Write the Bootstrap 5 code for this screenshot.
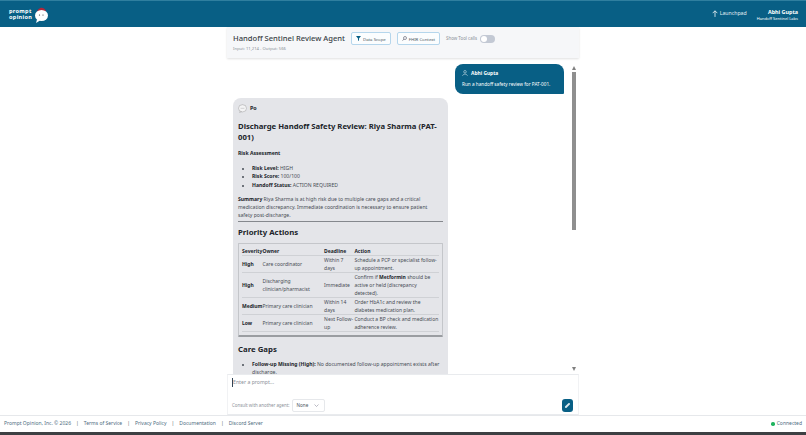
<!DOCTYPE html>
<html lang="en">
<head>
  <meta charset="UTF-8" />
  <meta name="viewport" content="width=device-width, initial-scale=1.0" />
  <title>Handoff Sentinel Review Agent</title>
  <link href="https://cdn.jsdelivr.net/npm/bootstrap@5.3.0/dist/css/bootstrap.min.css" rel="stylesheet" />
  <style>
    html, body { height: 100%; overflow: hidden; }
    body { font-family: "Noto Sans", "Open Sans", sans-serif; font-size: 5.1px; color: #2b2f36; background: #fff; display: flex; flex-direction: column; border-bottom: 3px solid #3d4043; }

    .top-bar { height: 27px; background: #085f85; border-top: 1px solid #2f7f9f; padding: 0 8px 0 9px; color: #fff; flex: none; }
    .logo-wrap { gap: 2px; }
    .logo-text { font-size: 5.6px; line-height: 6px; font-weight: 700; letter-spacing: .3px; }
    .launchpad { font-size: 5.2px; color: #e4eff4; margin-right: 10px; gap: 2px; }
    .user-name { font-size: 5.4px; font-weight: 700; line-height: 8px; }
    .user-org { font-size: 4px; line-height: 5px; }

    .main-col { width: 352px; flex: 1; min-height: 0; }
    .chat-head { height: 31px; background: #f6f7f9; padding: 5px 6px 0; box-shadow: 0 1px 2px rgba(0,0,0,.12); flex: none; position: relative; z-index: 1; gap: 6px; }
    .chat-title { font-size: 7.6px; line-height: 13px; color: #3a3f47; font-weight: 500; }
    .chat-usage { font-size: 4.2px; line-height: 6px; color: #8b9098; margin-top: 1px; }
    .btn-scope { font-size: 4.3px; line-height: 6px; padding: 0 4px; height: 13px; border: 1px solid #b5d6ec; border-radius: 2px; color: #4a5560; background: #fbfdfe; display: flex; align-items: center; gap: 2px; }
    .tool-row { height: 13px; gap: 3px; }
    .tool-label { font-size: 4.4px; color: #8b9098; }
    .fake-switch { width: 15px; height: 8px; border-radius: 4px; background: #c3c9d4; position: relative; }
    .fake-switch::after { content: ""; position: absolute; left: 1px; top: 1px; width: 6px; height: 6px; border-radius: 50%; background: #fff; }

    .chat-area { flex: 1; min-height: 0; }
    .chat-scroll { flex: 1; min-width: 0; overflow: hidden; padding: 6px 6px 0 6px; }
    .scroll-rail { width: 9px; flex: none; padding: 8px 3px 3px 2px; }
    .scroll-thumb { width: 4px; height: 158px; background: #8f8f8f; margin-top: 2px; }

    .bubble-user { width: 109px; height: 30px; background: #085f85; color: #fff; border-radius: 8px 8px 1px 8px; padding: 5px 7px; }
    .bubble-user .who { font-size: 4.9px; font-weight: 700; line-height: 8px; display: flex; align-items: center; gap: 3px; }
    .bubble-user .msg { font-size: 4.7px; line-height: 7px; margin-top: 4px; }
    .bubble-agent { width: 215px; background: #e4e5e9; border-radius: 8px; padding: 5px 5px 10px 5px; margin-top: 4px; }
    .bubble-agent .who { font-size: 5.4px; font-weight: 700; color: #20242a; display: flex; align-items: center; gap: 3px; height: 11px; margin-bottom: 7px; }
    .bubble-agent h1 { font-size: 7.7px; line-height: 11px; font-weight: 700; margin: 0 0 6px; color: #20242a; }
    .bubble-agent h2 { font-size: 7.8px; line-height: 11px; font-weight: 700; margin: 0 0 5px; color: #20242a; }
    .bubble-agent p { margin: 0 0 1px; line-height: 8.4px; color: #474c54; }
    .bubble-agent b { color: #20242a; font-weight: 700; }
    .bubble-agent ul { margin: 0 0 5.5px; padding-left: 14px; color: #474c54; line-height: 8.4px; }
    .bubble-agent hr { margin: 0 0 5px; border: 0; border-top: 1px solid #85888d; opacity: 1; }
    .bubble-agent .lead-line { margin-bottom: 6.5px; }

    .risk-table-wrap { border: 1px solid #c4c6ca; border-bottom: 2px solid #9a9da1; border-radius: 1px; padding: 3px; margin-bottom: 7px; }
    .risk-table { --bs-table-bg: transparent; margin: 0; font-size: 5px; line-height: 8px; color: #474c54; border-color: #cfd1d5; }
    .risk-table th, .risk-table td { padding: 0; vertical-align: middle; border-bottom: 1px solid #cfd1d5; color: #474c54; }
    .risk-table th { color: #20242a; }
    .risk-table td b { color: #20242a; }

    .prompt-box { height: 41px; border-top: 1px solid #e9ebee; border-bottom: 1px solid #e9ebee; border-left: 1px solid #f1f2f4; border-right: 1px solid #f1f2f4; padding: 3px 5px 2px 4px; flex: none; background: #fff; }
    .prompt-input { font-size: 5.2px; line-height: 9px; color: #8b9098; border-left: 1px solid #345; height: 9px; }
    .consult-row { gap: 2px; }
    .consult-label { font-size: 4.4px; color: #8b9098; }
    .none-select { width: 33px; height: 13px; border: 1px solid #e6e8eb; border-radius: 2px; font-size: 4.6px; color: #4a5560; padding: 0 5px 0 4px; }
    .send-btn { width: 11px; height: 13px; background: #085f85; border-radius: 3px; border: 0; padding: 0; }

    .page-foot { height: 17px; border-top: 1px solid #e6e8eb; padding: 0 4px; font-size: 5px; color: #4d6d80; flex: none; background: #fff; }
    .page-foot .sep { margin: 0 5px; color: #566; }
    .status-wrap { gap: 2px; }
    .status-dot { width: 3.5px; height: 3.5px; border-radius: 50%; background: #1fb45f; }
  </style>
</head>
<body>
  <div class="top-bar d-flex align-items-center justify-content-between">
    <div class="logo-wrap d-flex align-items-center">
      <div class="logo-text">prompt<br>opinion</div>
      <svg width="15" height="17" viewBox="0 0 15 17">
        <path d="M3 7C3 2 9 -1 12 5Z" fill="#b3263a"/>
        <ellipse cx="7.5" cy="9.5" rx="6.5" ry="5.5" fill="#fff"/>
        <path d="M3 13.5L2 17L6 14.5Z" fill="#fff"/>
        <circle cx="5.5" cy="9" r=".6" fill="#333"/><circle cx="9" cy="9" r=".6" fill="#333"/>
      </svg>
    </div>
    <div class="d-flex align-items-center">
      <div class="launchpad d-flex align-items-center">
        <svg width="6" height="7" viewBox="0 0 7 8"><path d="M3.5 8V1M.8 3.6L3.5 .8L6.2 3.6" fill="none" stroke="#fff" stroke-width=".9"/></svg>
        <span>Launchpad</span>
      </div>
      <div class="text-end">
        <div class="user-name">Abhi Gupta</div>
        <div class="user-org">Handoff Sentinel Labs</div>
      </div>
    </div>
  </div>

  <div class="main-col mx-auto d-flex flex-column">
    <div class="chat-head d-flex align-items-start">
      <div>
        <div class="chat-title">Handoff Sentinel Review Agent</div>
        <div class="chat-usage">Input: 11,214 - Output: 566</div>
      </div>
      <div class="btn-scope">
        <svg width="5" height="5" viewBox="0 0 5 5"><path d="M0 0H5L3 2.5V5L2 4.3V2.5Z" fill="#085f85"/></svg>Data Scope
      </div>
      <div class="btn-scope">
        <svg width="5" height="5" viewBox="0 0 5 5"><circle cx="3" cy="2" r="1.5" fill="none" stroke="#556" stroke-width=".6"/><path d="M2 3L.5 4.7" stroke="#556" stroke-width=".6"/></svg>FHIR Context
      </div>
      <div class="tool-row d-flex align-items-center">
        <span class="tool-label">Show Tool calls</span>
        <span class="fake-switch"></span>
      </div>
    </div>

    <div class="chat-area d-flex">
      <div class="chat-scroll">
        <div class="d-flex justify-content-end">
          <div class="bubble-user">
            <div class="who">
              <svg width="6" height="6" viewBox="0 0 6 6"><circle cx="3" cy="1.8" r="1.3" fill="none" stroke="#cfe2ea" stroke-width=".6"/><path d="M.6 5.8C.8 3.6 5.2 3.6 5.4 5.8" fill="none" stroke="#cfe2ea" stroke-width=".6"/></svg>
              Abhi Gupta
            </div>
            <div class="msg">Run a handoff safety review for PAT-001.</div>
          </div>
        </div>

        <div class="bubble-agent">
          <div class="who">
            <svg width="9" height="9" viewBox="0 0 9 9"><ellipse cx="4.5" cy="4.3" rx="4" ry="3.6" fill="#f4f4f5" stroke="#888" stroke-width=".4"/><path d="M2 7.2L1.5 8.8L3.6 7.8Z" fill="#f4f4f5" stroke="#888" stroke-width=".3"/><path d="M2.6 4.3H6.4" stroke="#aaa" stroke-width=".5"/></svg>
            Po
          </div>
          <h1>Discharge Handoff Safety Review: Riya Sharma (PAT-<wbr>001)</h1>
          <p class="lead-line"><b>Risk Assessment</b></p>
          <ul>
            <li><b>Risk Level:</b> HIGH</li>
            <li><b>Risk Score:</b> 100/100</li>
            <li><b>Handoff Status:</b> ACTION REQUIRED</li>
          </ul>
          <p><b>Summary</b> Riya Sharma is at high risk due to multiple care gaps and a critical medication discrepancy. Immediate coordination is necessary to ensure patient safety post-discharge.</p>
          <hr>
          <h2>Priority Actions</h2>
          <div class="risk-table-wrap">
            <table class="table risk-table">
              <thead>
                <tr><th>Severity</th><th>Owner</th><th>Deadline</th><th>Action</th></tr>
              </thead>
              <tbody>
                <tr><td><b>High</b></td><td>Care coordinator</td><td>Within 7 days</td><td>Schedule a PCP or specialist follow-up appointment.</td></tr>
                <tr><td><b>High</b></td><td>Discharging clinician/pharmacist</td><td>Immediate</td><td>Confirm if <b>Metformin</b> should be active or held (discrepancy<br>detected).</td></tr>
                <tr><td><b>Medium</b></td><td>Primary care clinician</td><td>Within 14 days</td><td>Order HbA1c and review the diabetes medication plan.</td></tr>
                <tr><td><b>Low</b></td><td>Primary care clinician</td><td>Next Follow-up</td><td>Conduct a BP check and medication adherence review.</td></tr>
              </tbody>
            </table>
          </div>
          <h2>Care Gaps</h2>
          <ul>
            <li><b>Follow-up Missing (High):</b> No documented follow-up appointment exists after discharge.</li>
          </ul>
        </div>
      </div>
      <div class="scroll-rail d-flex flex-column">
        <svg width="4" height="4" viewBox="0 0 6 4" preserveAspectRatio="none"><path d="M0 4L3 0L6 4Z" fill="#808080"/></svg>
        <div class="scroll-thumb"></div>
        <svg class="mt-auto" width="4" height="4" viewBox="0 0 6 4" preserveAspectRatio="none"><path d="M0 0L3 4L6 0Z" fill="#808080"/></svg>
      </div>
    </div>

    <div class="prompt-box d-flex flex-column justify-content-between">
      <div class="prompt-input">Enter a prompt...</div>
      <div class="d-flex align-items-center justify-content-between">
        <div class="consult-row d-flex align-items-center">
          <span class="consult-label">Consult with another agent:</span>
          <div class="none-select d-flex align-items-center justify-content-between">
            <span>None</span>
            <svg width="5" height="3" viewBox="0 0 5 3"><path d="M.5 .5L2.5 2.5L4.5 .5" fill="none" stroke="#778" stroke-width=".5"/></svg>
          </div>
        </div>
        <button class="send-btn d-flex align-items-center justify-content-center" type="button" aria-label="Send">
          <svg width="7" height="7" viewBox="0 0 7 7"><path d="M1 4.6L4.4 1.2C5.4.4 6.6 1.6 5.8 2.6L2.6 5.8C2 6.4 .6 6 1 4.6Z" fill="#dbe9ef"/></svg>
        </button>
      </div>
    </div>
  </div>

  <div class="page-foot d-flex align-items-center justify-content-between">
    <div>
      <span>Prompt Opinion, Inc. © 2026</span><span class="sep">|</span><span>Terms of Service</span><span class="sep">|</span><span>Privacy Policy</span><span class="sep">|</span><span>Documentation</span><span class="sep">|</span><span>Discord Server</span>
    </div>
    <div class="status-wrap d-flex align-items-center">
      <span class="status-dot"></span><span>Connected</span>
    </div>
  </div>

  <script src="https://cdn.jsdelivr.net/npm/bootstrap@5.3.0/dist/js/bootstrap.bundle.min.js"></script>
</body>
</html>
